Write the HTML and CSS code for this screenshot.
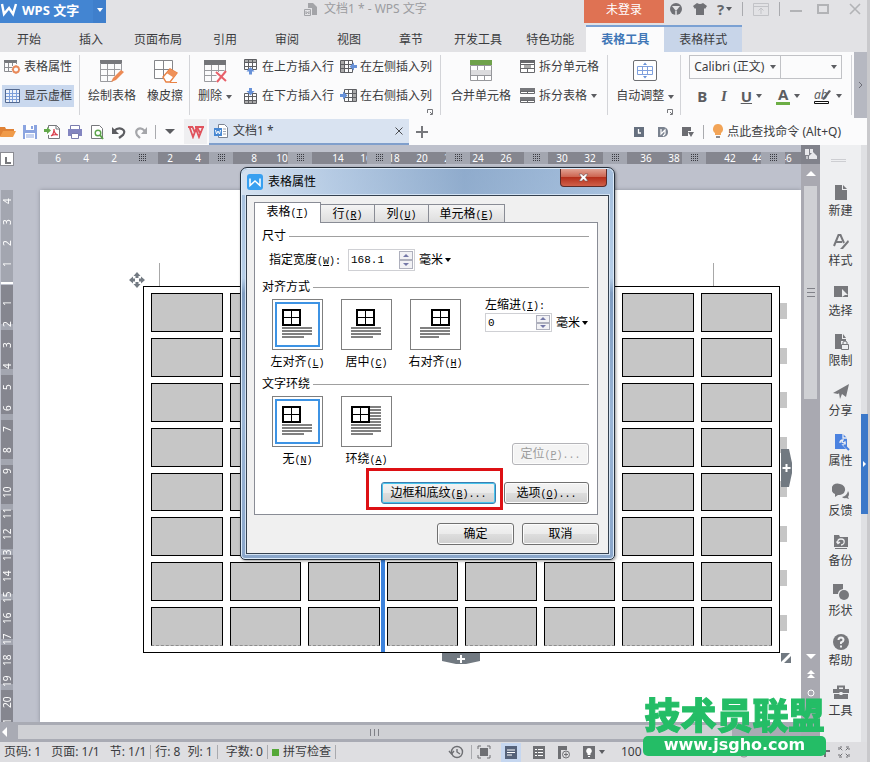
FILE: index.html
```html
<!DOCTYPE html>
<html lang="zh-CN">
<head>
<meta charset="utf-8">
<title>文档1 * - WPS 文字</title>
<link rel="stylesheet" href="styles.css">
</head>
<body>
<div class="app">
  <header class="titlebar">
    <button class="brand"><svg width="18" height="16" viewBox="0 0 18 16"><path d="M2 2l2 10 5-6 4 6 3-10" fill="none" stroke="#fff" stroke-width="2.4"/></svg><b>WPS 文字</b></button>
    <button class="brand-drop" aria-label="菜单"><i class="caret white"></i></button>
    <div class="doc-title">
      <svg width="15" height="15" viewBox="0 0 15 15"><path d="M5 1h5l4 4v8H9V6H5z" fill="#a3a4a8"/><path d="M1.500 7.500h6v6h-6z" fill="none" stroke="#a3a4a8"/><path d="M3 9v3l1.500-2L6 12V9" fill="none" stroke="#a3a4a8"/></svg>
      <span>文档1 * - WPS 文字</span>
    </div>
    <button class="login">未登录</button>
    <div class="win-tools">
      <svg width="14" height="14" viewBox="0 0 14 14"><circle cx="7" cy="7" r="6" fill="#707176"/><path d="M3 4h8L7 9z" fill="#e3e3e6"/><path d="M7 9v4" stroke="#e3e3e6" stroke-width="1.500" fill="none"/></svg>
      <svg width="14" height="14" viewBox="0 0 14 14"><path d="M4 1q3 2 6 0l4 3-2 3-1-1v7H3V6L2 7 0 4z" fill="#707176"/></svg>
      <span class="help">?<i class="caret"></i></span>
      <i class="bar"></i>
      <svg width="16" height="15" viewBox="0 0 16 15"><path d="M.5 1.500h15v12H.5zM.5 4.500h15M8 12V6M5.500 8.500L8 6l2.500 2.500" fill="none" stroke="#c2c3c7"/></svg>
      <i class="bar"></i>
      <svg width="12" height="12" viewBox="0 0 12 12"><path d="M0 8h12" stroke="#b2b3b6" stroke-width="2"/></svg>
      <svg width="12" height="12" viewBox="0 0 12 12"><path d="M1 2h10v8H1z" fill="none" stroke="#b2b3b6" stroke-width="2"/></svg>
      <svg width="12" height="12" viewBox="0 0 12 12"><path d="M1 1l10 10M11 1L1 11" stroke="#b2b3b6" stroke-width="1.600"/></svg>
    </div>
  </header>

  <nav class="tabs">
    <button>开始</button><button>插入</button><button class="wide">页面布局</button><button>引用</button><button>审阅</button><button>视图</button><button>章节</button><button class="wide">开发工具</button><button class="wide">特色功能</button><button class="context active">表格工具</button><button class="context">表格样式</button>
  </nav>

  <section class="ribbon">
    <div class="group stack first">
      <button class="cmd"><svg width="17" height="16" viewBox="0 0 17 16"><path d="M0 1h13v3H0z" fill="#77787c"/><path d="M.5 3v9.500H8M.5 8.500h8M4.500 4v8M8.500 4v3M12.500 3v2" fill="none" stroke="#8b8c90"/><circle cx="12" cy="10.500" r="3" fill="none" stroke="#e8895a" stroke-width="1.800"/><path d="M12 6v9M7.700 10.500h8.600" stroke="#e8895a" stroke-dasharray="1.500 6"/></svg>表格属性</button>
      <button class="cmd on"><svg width="17" height="16" viewBox="0 0 17 16"><path d="M1.500 1.500h14v13h-14z" fill="#eef3fb" stroke="#53688f"/><path d="M2 5.500h13M2 8.500h13M2 11.500h13M5.500 2v12M8.500 2v12M12.500 2v12" stroke="#7d9fda"/></svg>显示虚框</button>
    </div>
    <div class="group">
      <button class="big"><svg width="26" height="25" viewBox="0 0 26 25"><path d="M1 1h22v4H1z" fill="#77787c"/><path d="M1.500 4v18.500h12M22.500 4v9M1.500 10.500h20M1.500 16.500h14M8.500 5v17M15.500 5v12" fill="none" stroke="#9a9b9f"/><path d="M12 23l2-4 8-8 3 2-8 8z" fill="#ec8a55"/></svg>绘制表格</button>
      <button class="big"><svg width="26" height="25" viewBox="0 0 26 25"><path d="M2.500 1.500h18v18h-18zM11.500 2v17M3 10.500h17" fill="#fff" stroke="#85868a"/><path d="M11 18l7-8 7 4-7 9h-4z" fill="#fff" stroke="#e98244" stroke-width="1.400"/><path d="M14.500 14l3.500-4 7 4-3.500 4.500z" fill="#ef9159"/><path d="M18 23.500h7" stroke="#e98244"/></svg>橡皮擦</button>
    </div>
    <div class="group">
      <button class="big"><svg width="26" height="25" viewBox="0 0 26 25"><path d="M2 1h22v5H2z" fill="#737478"/><path d="M2.500 6v16.500h12M23.500 6v7M2.500 11.500h20M2.500 16.500h12M9.500 6v16M16.500 6v7" fill="none" stroke="#9a9b9f"/><path d="M14 13l10 9M24 12l-9 11" stroke="#e8606a" stroke-width="2"/></svg><span>删除<i class="caret"></i></span></button>
      <div class="stack">
        <button class="cmd"><svg width="16" height="16" viewBox="0 0 16 16"><path d="M1 1h13v3H1z" fill="#aaa"/><path d="M1.500 .5h12v10h-12zM2 3.500h11M2 7.500h11M5.500 1v9M9.500 1v9" fill="none" stroke="#5d5e62"/><path d="M6 15.500v-3H3.500L7.500 8l4 4.500H9v3z" fill="#6791d8"/></svg>在上方插入行</button>
        <button class="cmd"><svg width="16" height="16" viewBox="0 0 16 16"><path d="M1 12h13v3H1z" fill="#aaa"/><path d="M1.500 5.500h12v10h-12zM2 8.500h11M2 12.500h11M5.500 6v9M9.500 6v9" fill="none" stroke="#5d5e62"/><path d="M6 0v3H3.500l4 4.500 4-4.500H9V0z" fill="#6791d8"/></svg>在下方插入行</button>
      </div>
      <div class="stack">
        <button class="cmd"><svg width="17" height="16" viewBox="0 0 17 16"><path d="M1 2h4v12H1z" fill="#aaa"/><path d="M.5 1.500h12v12H.5zM1 5.500h11M1 9.500h11M4.500 2v11M8.500 2v11" fill="none" stroke="#5d5e62"/><path d="M17 6v3h-3v2.500L9.500 7.500 14 3.500V6z" fill="#6791d8"/></svg>在左侧插入列</button>
        <button class="cmd"><svg width="17" height="16" viewBox="0 0 17 16"><path d="M12 2h4v12h-4z" fill="#aaa"/><path d="M4.500 1.500h12v12h-12zM5 5.500h11M5 9.500h11M8.500 2v11M12.500 2v11" fill="none" stroke="#5d5e62"/><path d="M0 6v3h3v2.500l4.500-4L3 3.500V6z" fill="#6791d8"/></svg>在右侧插入列</button>
      </div>
      <svg class="corner" width="6" height="6" viewBox="0 0 6 6"><path d="M.5 4V.5H5.500V5.500H3M3 3l2 2" fill="none" stroke="#77787c"/></svg>
    </div>
    <div class="group merge">
      <button class="big"><svg width="26" height="25" viewBox="0 0 26 25"><path d="M2 1h22v5H2z" fill="#6fa24b"/><path d="M2.500 6.500h21v15h-21zM3 16.500h20M9.500 17v4M16.500 17v4M9.500 6v5M16.500 6v5" fill="#fff" stroke="#96979b"/><path d="M3 11h20v5H3z" fill="#dcdcde"/></svg>合并单元格</button>
      <div class="stack">
        <button class="cmd"><svg width="16" height="16" viewBox="0 0 16 16"><path d="M.5 1.500h14v12H.5zM1 5.500h14M1 9.500h14M5.500 6v3.500M10.500 6v3.500M7.500 10v4" fill="#fff" stroke="#67686c"/><path d="M0 1h15v3H0z" fill="#67686c"/><path d="M4 6h7v3H4z" fill="#aaa"/></svg>拆分单元格</button>
        <button class="cmd"><svg width="16" height="16" viewBox="0 0 16 16"><path d="M.5 .5h14v5H.5zM.5 9.500h14v5H.5zM1 3.500h14M1 12.500h14M7.500 3v3M7.500 9v5" fill="#fff" stroke="#67686c"/><path d="M0 0h15v3H0zM0 9h15v3H0z" fill="#77787c"/></svg>拆分表格<i class="caret tight"></i></button>
      </div>
    </div>
    <div class="group">
      <button class="big"><svg width="26" height="25" viewBox="0 0 26 25"><rect x="1.500" y="1.500" width="23" height="20" rx="1.500" fill="#fff" stroke="#6d6e72"/><path d="M5.500 7.500h15v8h-15zM6 11.500h14M10.500 8v7M15.500 8v7" fill="none" stroke="#7fa0dd"/><path d="M11 6l2-2.500L15 6zM11 17l2 2.500 2-2.500z" fill="#6791d8"/></svg><span>自动调整<i class="caret"></i></span></button>
      <svg class="corner" width="6" height="6" viewBox="0 0 6 6"><path d="M.5 4V.5H5.500V5.500H3M3 3l2 2" fill="none" stroke="#77787c"/></svg>
    </div>
    <div class="group fonts">
      <div class="boxes">
        <label class="pick family"><select aria-label="字体"><option>Calibri (正文)</option></select><i class="caret"></i></label>
        <label class="pick size"><select aria-label="字号"><option></option></select><i class="caret"></i></label>
      </div>
      <div class="format">
        <button aria-label="加粗"><b>B</b></button>
        <button aria-label="倾斜"><em>I</em></button>
        <button aria-label="下划线"><u>U</u><i class="caret"></i></button>
        <button aria-label="字体颜色" class="color"><span>A</span><i class="caret"></i></button>
        <button aria-label="突出显示"><svg width="18" height="18" viewBox="0 0 18 18"><text x="0" y="12" class="ab">ab</text><path d="M8 12l7-9 2 1-7 9z" fill="#5c5d61"/><path d="M.5 14.500h14v2H.5z" fill="#fff" stroke="#111"/></svg><i class="caret"></i></button>
      </div>
    </div>
    <button class="more" aria-label="更多"><svg width="5" height="8" viewBox="0 0 5 8"><path d="M1 1l3 3-3 3" fill="none" stroke="#6d6e78"/></svg></button>
  </section>

  <section class="docbar">
    <div class="quick">
      <svg width="16" height="16" viewBox="0 0 16 16"><path d="M0 13V3h5l1 2h8v3H4z" fill="#e08236"/><path d="M3 7h13l-3 6H0z" fill="#f09b4a"/></svg>
      <svg width="16" height="16" viewBox="0 0 16 16"><path d="M1 1h14v14H1z" fill="#8ba4e0"/><path d="M4 1h8v5H4z" fill="#fff"/><path d="M3 9h10v6H3z" fill="#fff"/><path d="M9 2h2v3H9z" fill="#8ba4e0"/><path d="M4 11h8M4 13h8" stroke="#8ba4e0"/></svg>
      <svg width="17" height="16" viewBox="0 0 17 16"><path d="M4.500 4V1.500h8l3 3v10h-11V11" fill="#fff" stroke="#77787c"/><path d="M12 1v4h4" fill="none" stroke="#77787c"/><path d="M0 5h3V3l4 3.500L3 10V8H0z" fill="#62a84a"/><path d="M7 12q3-2 3-7 0 5 4 6-4-1-7 1z" fill="none" stroke="#d9414e" stroke-width="1.200"/></svg>
      <svg width="16" height="16" viewBox="0 0 16 16"><path d="M3.500 1.500h9v4h-9z" fill="#fff" stroke="#7a7cae"/><path d="M1 5h14v7H1z" fill="#8385c0"/><path d="M4.500 9.500h7v5h-7z" fill="#fff" stroke="#7a7cae"/></svg>
      <svg width="16" height="16" viewBox="0 0 16 16"><path d="M2.500 1.500h8l3 3v10h-11z" fill="#fff" stroke="#77787c"/><circle cx="9" cy="9" r="2.800" fill="#fff" stroke="#5ba34a" stroke-width="1.400"/><path d="M11 11l3 4" stroke="#5ba34a" stroke-width="1.800"/></svg>
      <svg width="16" height="16" viewBox="0 0 16 16"><path d="M3 7q4-4 8-2t1 6l-4 3" fill="none" stroke="#5c5d61" stroke-width="2.200"/><path d="M1 3v7h7z" fill="#5c5d61"/></svg>
      <svg width="16" height="16" viewBox="0 0 16 16"><path d="M12 7Q8 3 5 5t-1 6l3 3" fill="none" stroke="#a5a6aa" stroke-width="2.200"/><path d="M14 3v7H8z" fill="#a5a6aa"/></svg>
    </div>
    <i class="bar"></i>
    <button class="quick-more" aria-label="自定义"><i class="caret large"></i></button>
    <button class="home" aria-label="首页"><svg width="18" height="14" viewBox="0 0 18 14"><path d="M1 2h5M8 2h9M2.500 2L6 12l3-8 3 8 4-10M5.500 2L8 8M10 2l3 6" fill="none" stroke="#e0525c" stroke-width="1.800"/></svg></button>
    <div class="doc-tab">
      <svg width="15" height="16" viewBox="0 0 15 16"><path d="M4.500 1.500h6l3 3v10h-9z" fill="#fff" stroke="#7d8492"/><path d="M9 6h3M9 8.500h3M9 11h3" stroke="#9aa3b2"/><path d="M0 5h8v8H0z" fill="#4787d2"/><path d="M1.500 7l1 4L4 8l1.500 3 1-4" fill="none" stroke="#fff"/></svg>
      <span>文档1 *</span>
      <button aria-label="关闭文档"><svg width="8" height="8" viewBox="0 0 8 8"><path d="M.5 .5l7 7M7.500 .5l-7 7" stroke="#4b4c50"/></svg></button>
    </div>
    <button class="plus" aria-label="新建"><svg width="12" height="12" viewBox="0 0 12 12"><path d="M6 0v12M0 6h12" stroke="#77787c" stroke-width="2"/></svg></button>
    <div class="doc-tools">
      <svg width="12" height="12" viewBox="0 0 12 12"><path d="M1 1h10v10H1z" fill="#66707f"/><path d="M5.500 3v4H8" fill="none" stroke="#fff" stroke-width="1.300"/></svg>
      <svg width="12" height="12" viewBox="0 0 12 12"><path d="M1 1h6q4 1 4 5t-4 5H1z" fill="#7a828f"/><path d="M4 3v5l4-4v4l-2 2" fill="none" stroke="#fff" stroke-width="1.200"/></svg>
      <svg width="14" height="12" viewBox="0 0 14 12"><path d="M1 1h9v4H7v5H1zM7 6h6l-3 5z" fill="#6c6d72"/></svg>
      <i class="bar"></i>
      <svg width="12" height="15" viewBox="0 0 12 15"><path d="M6 0a5 5 0 0 1 3 9v2H3V9a5 5 0 0 1 3-9z" fill="#f2a457"/><path d="M4 12h4v2H4z" fill="#8a8b90"/></svg>
      <span>点此查找命令 (Alt+Q)</span>
    </div>
  </section>

  <main class="work">
    <div class="canvas">
      <div class="hruler">
        <span class="stop"><svg width="12" height="12" viewBox="0 0 12 12"><path d="M5 4v6h5" fill="none" stroke="#77787c" stroke-width="2"/></svg></span>
        <div class="scale">
          <div class="nums"><span>6</span><span>4</span><span>2</span><span></span><span>2</span><span>4</span><span></span><span>8</span><span>10</span><span></span><span>14</span><span>16</span><span>18</span><span>20</span><span>22</span><span>24</span><span>26</span><span></span><span>30</span><span>32</span><span></span><span>36</span><span>38</span><span></span><span>42</span><span>44</span><span>46</span></div>
          <div class="marks"><i></i><i></i><i></i><i></i><i></i><i></i><i></i><i></i><i></i></div>
        </div>
      </div>
      <div class="sheet-row">
        <div class="vruler">
          <div class="before"><span>4</span><span>3</span><span>2</span><span>1</span></div>
          <div class="after"><span>1</span><span>2</span><span>3</span><span>4</span><span>5</span><span>6</span><span>7</span><span>8</span><span>9</span><span>10</span><span>11</span><span>12</span><span>13</span><span>14</span><span>15</span><span>16</span><span>17</span><span>18</span><span>19</span><span>20</span><span>1</span></div>
        </div>
        <div class="page">
          <div class="table-wrap">
            <table class="grid">
              <tr><td></td><td></td><td></td><td></td><td></td><td></td><td></td><td></td></tr>
              <tr><td></td><td></td><td></td><td></td><td></td><td></td><td></td><td></td></tr>
              <tr><td></td><td></td><td></td><td></td><td></td><td></td><td></td><td></td></tr>
              <tr><td></td><td></td><td></td><td></td><td></td><td></td><td></td><td></td></tr>
              <tr><td></td><td></td><td></td><td></td><td></td><td></td><td></td><td></td></tr>
              <tr><td></td><td></td><td></td><td></td><td></td><td></td><td></td><td></td></tr>
              <tr><td></td><td></td><td></td><td></td><td></td><td></td><td></td><td></td></tr>
              <tr><td></td><td></td><td></td><td></td><td></td><td></td><td></td><td></td></tr>
            </table>
            <div class="row-ends"><i></i><i></i><i></i><i></i><i></i><i></i><i></i><i></i></div>
            <i class="col-line"></i><i class="margin-mark start"></i><i class="margin-mark end"></i>
            <svg class="move" width="18" height="18" viewBox="0 0 18 18"><path d="M9 1l3.500 4H10.500v2h-3V5H5.500zM9 17l3.500-4H10.500v-2h-3v2H5.500zM1 9l4-3.500V7.500h2v3H5v2zM17 9l-4-3.500V7.500h-2v3h2v2z" fill="#737a82"/></svg>
            <svg class="add-row" width="38" height="12" viewBox="0 0 38 12"><path d="M0 0h38v8l-14 3H14L0 8z" fill="#717981"/><path d="M19 2v8M15 6h8" stroke="#fff" stroke-width="2"/></svg>
            <svg class="add-col" width="12" height="38" viewBox="0 0 12 38"><path d="M0 0h8l3 14v10L8 38H0z" fill="#717981"/><path d="M5.500 15v8M1.500 19h8" stroke="#fff" stroke-width="2"/></svg>
            <svg class="resize" width="10" height="10" viewBox="0 0 10 10"><path d="M0 0h9L0 9zM10 3v7H3z" fill="#717981"/></svg>
          </div>
        </div>
      </div>
      <div class="hscroll"><i class="tri-left"></i><div class="thumb"><svg width="10" height="7" viewBox="0 0 10 7"><path d="M.5 0v7M4.500 0v7M8.500 0v7" stroke="#808188"/></svg></div></div>
    </div>

    <div class="vscroll">
      <div class="ruler-toggle"><svg width="12" height="11" viewBox="0 0 12 11"><path d="M0 0h4v6H0zM5 0h3v4H5z" fill="#e8e8ec"/><path d="M4 10V7l4-4 4 4v3z" fill="#e8e8ec"/><path d="M1 7h2v3H1z" fill="#c4c4ca"/></svg></div>
      <i class="tri-up"></i>
      <div class="thumb"><svg width="8" height="10" viewBox="0 0 8 10"><path d="M0 .5h8M0 4.500h8M0 8.500h8" stroke="#808188"/></svg></div>
      <div class="jump"><i class="tri-down"></i><svg width="10" height="10" viewBox="0 0 10 10"><path d="M1 5l4-4 4 4zM1 9l4-4 4 4z" fill="#fff"/></svg><svg width="8" height="8" viewBox="0 0 8 8"><circle cx="4" cy="4" r="3" fill="none" stroke="#fff"/></svg></div>
    </div>

    <aside class="pane">
      <i class="grip"></i>
      <button><svg width="18" height="18" viewBox="0 0 18 18"><path d="M3 2h7v5h5v10H3zM11 2l4 4h-4z"/></svg>新建</button>
      <button><svg width="18" height="18" viewBox="0 0 18 18"><path d="M2 13L6.500 2h2L12 10M4 9h6" class="line"/><path d="M9 15l7-8 1 2-6 7H8z"/></svg>样式</button>
      <button><svg width="18" height="18" viewBox="0 0 18 18"><path d="M2 3h14v11H2z"/><path d="M10 6l6 6h-3l-3 2z" class="cut"/></svg>选择</button>
      <button><svg width="18" height="18" viewBox="0 0 18 18"><path d="M3 1h7v5h4v2H9v8H3zM11 1l3 4h-3z"/><path d="M9.500 11.500h7v5h-7zM11 11V9q2-2 4 0v2" class="thin"/></svg>限制</button>
      <button><svg width="18" height="18" viewBox="0 0 18 18"><path d="M1 10L17 1l-3 13-4-3-2 5-1-6 7-6-8 7z"/></svg>分享</button>
      <button class="blue"><svg width="18" height="18" viewBox="0 0 18 18"><path d="M3 1h8l4 4v11H3z"/><path d="M11 1v4h4" class="cut-line"/><path d="M8 10q0-3 3-3l-1 2 2 1 1-1q1 3-2 3l5 5" class="cut-line"/><path d="M12 12l5 5" class="line"/></svg>属性</button>
      <button><svg width="18" height="18" viewBox="0 0 18 18"><path d="M8 1a6 5.500 0 1 1-2 11l-3 2V11a6 5.500 0 0 1 5-10z"/><path d="M10 14q5-1 6-6 2 3 0 6l1 2-3-1q-2 1-4-1z"/></svg>反馈</button>
      <button><svg width="18" height="18" viewBox="0 0 18 18"><path d="M2 2h5l1 2h8v10H2zM3 15h12v1H3z"/><path d="M6 10q-1-4 3-4t3 4q-1 2-3 2M4.500 8.500l1.500 2L8 9" class="cut-line"/></svg>备份</button>
      <button><svg width="18" height="18" viewBox="0 0 18 18"><path d="M1 1h10v5q-5 1-5 5H1z"/><circle cx="12" cy="12" r="5"/></svg>形状</button>
      <button><svg width="18" height="18" viewBox="0 0 18 18"><circle cx="9" cy="9" r="8"/><path d="M6.500 7q0-2.500 2.500-2.500T11.500 7Q11.500 8.500 9 9.500V11M9 12.500v2" class="cut-line bold"/></svg>帮助</button>
      <button><svg width="18" height="18" viewBox="0 0 18 18"><path d="M1 6h16v4H1zM2 11h14v5H2z"/><path d="M6 6V3.500h6V6" class="line"/><path d="M7.500 9h3v3h-3z" class="cut"/></svg>工具</button>
    </aside>
    <div class="edge"><button aria-label="收起"><svg width="5" height="6" viewBox="0 0 5 6"><path d="M1 0l3 3-3 3z" fill="#fff"/></svg></button></div>

    <section class="dialog" role="dialog" aria-label="表格属性">
      <header>
        <svg width="16" height="16" viewBox="0 0 16 16"><rect width="16" height="16" rx="3" fill="#38a0f0"/><path d="M3 4.500v7l5-4.500 5 4.500v-7" fill="none" stroke="#fff" stroke-width="1.500"/></svg>
        <span>表格属性</span>
        <button aria-label="关闭"><svg width="11" height="9" viewBox="0 0 11 9"><path d="M1 1h3l1.500 2L7 1h3L7.500 4.500 10 8H7L5.500 6 4 8H1l2.500-3.500z" fill="#fff" stroke="#6d5050" stroke-width=".6"/></svg></button>
      </header>
      <div class="client">
        <div class="dtabs">
          <button class="sel">表格<kbd>(<u>T</u>)</kbd></button><button>行<kbd>(<u>R</u>)</kbd></button><button>列<kbd>(<u>U</u>)</kbd></button><button>单元格<kbd>(<u>E</u>)</kbd></button>
        </div>
        <div class="panel">
          <h3>尺寸</h3>
          <div class="width-row">
            <label for="w">指定宽度<kbd>(<u>W</u>):</kbd></label>
            <span class="spin"><input id="w" value="168.1"><i><b></b><b class="dn"></b></i></span>
            <span>毫米<i class="caret black"></i></span>
          </div>
          <h3>对齐方式</h3>
          <div class="options align">
            <label><input type="radio" name="align" checked><span class="thumbnail"><svg width="31" height="31" viewBox="0 0 31 31"><path d="M1 1h17v15H1z" class="frame"/><path d="M1 8.500h17M9.500 1v15" class="inner"/><path d="M0 19h30M0 22h30M0 25h30M0 28h22" class="lines"/></svg></span><span>左对齐<kbd>(<u>L</u>)</kbd></span></label>
            <label><input type="radio" name="align"><span class="thumbnail"><svg width="31" height="31" viewBox="0 0 31 31"><path d="M6 1h17v15H6z" class="frame"/><path d="M6 8.500h17M14.500 1v15" class="inner"/><path d="M0 19h30M0 22h30M0 25h30M0 28h22" class="lines"/></svg></span><span>居中<kbd>(<u>C</u>)</kbd></span></label>
            <label><input type="radio" name="align"><span class="thumbnail"><svg width="31" height="31" viewBox="0 0 31 31"><path d="M12 1h17v15H12z" class="frame"/><path d="M12 8.500h17M20.500 1v15" class="inner"/><path d="M0 19h30M0 22h30M0 25h30M0 28h19" class="lines"/></svg></span><span>右对齐<kbd>(<u>H</u>)</kbd></span></label>
            <div class="indent">
              <label for="ind">左缩进<kbd>(<u>I</u>):</kbd></label>
              <div><span class="spin"><input id="ind" value="0"><i><b></b><b class="dn"></b></i></span><span>毫米<i class="caret black"></i></span></div>
            </div>
          </div>
          <h3>文字环绕</h3>
          <div class="options">
            <label><input type="radio" name="wrap" checked><span class="thumbnail"><svg width="31" height="31" viewBox="0 0 31 31"><path d="M1 1h17v15H1z" class="frame"/><path d="M1 8.500h17M9.500 1v15" class="inner"/><path d="M0 19h30M0 22h30M0 25h30M0 28h22" class="lines"/></svg></span><span>无<kbd>(<u>N</u>)</kbd></span></label>
            <label><input type="radio" name="wrap"><span class="thumbnail"><svg width="31" height="31" viewBox="0 0 31 31"><path d="M18 1h12M18 4h12M18 7h12M18 10h12M18 13h12M18 16h12M0 19h30M0 22h30M0 25h30M0 28h22" class="lines"/><path d="M1 1h17v15H1z" class="frame"/><path d="M1 8.500h17M9.500 1v15" class="inner"/></svg></span><span>环绕<kbd>(<u>A</u>)</kbd></span></label>
            <button class="btn locate" disabled>定位<kbd>(<u>P</u>)...</kbd></button>
          </div>
          <div class="actions">
            <button class="btn focus">边框和底纹<kbd>(<u>B</u>)...</kbd></button>
            <button class="btn">选项<kbd>(<u>O</u>)...</kbd></button>
            <i class="callout"></i>
          </div>
        </div>
        <div class="foot"><button class="btn">确定</button><button class="btn">取消</button></div>
      </div>
    </section>
  </main>

  <footer class="status">
    <span>页码: 1</span><span class="s2">页面: 1/1</span><span>节: 1/1</span><i class="bar"></i><span class="s3">行: 8</span><span>列: 1</span><i class="bar"></i><span class="s4">字数: 0</span><i class="bar"></i><i class="ok"></i><span>拼写检查</span><i class="bar"></i>
    <div class="views">
      <svg width="16" height="16" viewBox="0 0 16 16"><circle cx="9" cy="8" r="5.500" fill="none" stroke="#6e6f73" stroke-width="1.400"/><path d="M9 5v3l3 2M1 7l2.500 3L6 7" fill="none" stroke="#6e6f73" stroke-width="1.400"/></svg>
      <i class="bar"></i>
      <svg width="14" height="14" viewBox="0 0 14 14"><path d="M3 3h8v8H3z" fill="#6e6f73"/><path d="M1 4V1h3M10 1h3v3M13 10v3h-3M4 13H1v-3" fill="none" stroke="#6e6f73"/></svg>
      <span class="view-on"><svg width="12" height="13" viewBox="0 0 12 13"><path d="M0 0h12v13H0z" fill="#55627a"/><path d="M2 4h8M2 6.500h8M2 9h5" stroke="#fff"/></svg></span>
      <svg width="12" height="13" viewBox="0 0 12 13"><path d="M0 0h12v13H0z" fill="#6e6f73"/><path d="M2 3.500h2M5 3.500h5M2 6.500h2M5 6.500h5M2 9.500h2M5 9.500h5" stroke="#fff"/></svg>
      <svg width="14" height="13" viewBox="0 0 14 13"><path d="M1 0h9v4H4v9H1z" fill="#6e6f73"/><circle cx="9" cy="8.500" r="3.500" fill="#dedee1" stroke="#6e6f73"/><path d="M7 8.500h4M9 6.500v4" stroke="#6e6f73"/></svg>
      <span class="bulb"><svg width="12" height="13" viewBox="0 0 12 13"><path d="M0 0h12v13H0z" fill="#6e6f73"/><path d="M6 2a3 3 0 0 1 1.500 5.500V9h-3V7.500A3 3 0 0 1 6 2zM5 10h2v1H5z" fill="#fff"/></svg><i class="caret"></i></span>
      <span class="zoom">100</span>
      <svg class="knob" width="12" height="12" viewBox="0 0 12 12"><circle cx="6" cy="6" r="5" fill="none" stroke="#8c8d91"/></svg>
      <svg width="8" height="12" viewBox="0 0 8 12"><path d="M0 5h8M3 2v9" stroke="#6e6f73" stroke-width="2"/></svg>
      <svg class="full" width="12" height="12" viewBox="0 0 12 12"><path d="M1 4V1h3M8 1h3v3M11 8v3H8M4 11H1V8M2 2l3 3M10 2L7 5M10 10L7 7M2 10l3-3" fill="none" stroke="#6e6f73" stroke-dasharray="3 1"/></svg>
    </div>
  </footer>
</div>
<div class="stamp"><strong>技术员联盟</strong><span>www.jsgho.com</span></div>
</body>
</html>
```
FILE: styles.css
```css
* { box-sizing: border-box; }
body { margin: 0; background: #c9c9cc; color: #3b3c40; font: 12px/16px "Noto Sans", "Noto Sans CJK SC", sans-serif; overflow: hidden; }
button, input, select { font: inherit; color: inherit; margin: 0; padding: 0; border: 0; background: none; }
button { white-space: nowrap; }
svg { display: block; flex: none; }
h3 { margin: 0; font: inherit; }
.app { display: flex; flex-direction: column; height: 100vh; margin-right: 3px; background: #e2e2e5; white-space: nowrap; }
.caret { display: inline-block; flex: none; border: 3px solid transparent; border-top: 4px solid #5c5d61; border-bottom: 0; margin-left: 4px; vertical-align: middle; }
.caret.white { border-top-color: #fff; margin: 0; }
.caret.black { border-top-color: #000; margin-left: 2px; }
.caret.large { border-width: 5px 5px 0; margin: 0; }
.caret.tight { margin-left: 1px; }
.bar { width: 1px; height: 14px; background: #a9aaae; flex: none; }

.titlebar { display: flex; height: 24px; align-items: flex-start; flex: none; }
.brand { display: flex; align-items: center; height: 23px; width: 93px; background: #4385d2; color: #fff; gap: 4px; font-size: 13px; padding-bottom: 4px; }
.brand-drop { width: 13px; height: 23px; background: #3f7fcc; display: flex; align-items: center; justify-content: center; padding-bottom: 4px; }
.doc-title { flex: 1; display: flex; align-items: center; gap: 6px; padding-left: 197px; height: 18px; color: #9b9ca0; }
.login { width: 80px; height: 23px; background: #df7253; color: #fff; padding-bottom: 4px; }
.win-tools { display: flex; align-items: center; width: 203px; height: 18px; padding-left: 5px; gap: 10px; color: #66676b; }
.win-tools svg:nth-last-child(2) { margin-left: 5px; }
.win-tools svg:last-child { margin-left: 10px; }
.help { font-size: 15px; font-weight: bold; display: flex; align-items: center; }
.help .caret { margin-left: 2px; }

.tabs { display: flex; height: 28px; flex: none; margin-left: -2px; padding-top: 1px; }
.tabs button { padding: 3px 19px 0; }
.tabs .wide { padding: 3px 12px 0; }
.tabs .context { padding: 0 15px; border-top: 2px solid #7ba1d3; background: #c8d5e9; }
.tabs .active { background: #fbfbfc; color: #4177b7; font-weight: bold; }

.ribbon { display: flex; height: 66px; flex: none; background: #fbfbfc; padding-left: 2px; }
.group { position: relative; display: flex; align-items: stretch; padding: 4px 6px; gap: 9px; border-right: 1px solid #d3d4d8; margin: 3px 0; height: 60px; }
.ribbon .stack { display: flex; flex-direction: column; gap: 7px; }
.ribbon .first { padding: 1px 5px 0 0; }
.cmd { display: flex; align-items: center; gap: 3px; height: 22px; padding: 0 2px; }
.cmd.on { background: #c9d8ee; }
.group > .stack { margin-top: -3px; }
.stack + .stack { margin-left: -7px; }
.ribbon .merge { padding-left: 8px; gap: 7px; }
.big { display: flex; flex-direction: column; align-items: center; gap: 4px; padding-left: 2px; }
.corner { position: absolute; right: 7px; bottom: 0; }
.ribbon .fonts { flex-direction: column; gap: 4px; padding: 0 9px 0 8px; }
.fonts .boxes { display: flex; width: 153px; height: 24px; border: 1px solid #c1c2c6; }
.pick { position: relative; display: flex; align-items: center; padding-right: 4px; }
.pick select { appearance: none; width: 100%; height: 22px; padding-left: 4px; overflow: hidden; }
.pick.family { width: 91px; border-right: 1px solid #c1c2c6; }
.pick.size { flex: 1; }
.pick .caret { margin-left: 0; }
.format { display: flex; align-items: center; justify-content: space-between; height: 26px; padding-left: 8px; font-size: 15px; color: #5c5d61; }
.format button { display: flex; align-items: center; }
.format em, .format u { font-family: "Liberation Serif", serif; font-weight: bold; }
.format u { font-family: inherit; }
.color span { line-height: 15px; border-bottom: 3px solid #6cae45; padding: 0 2px; font-weight: bold; }
.ab { font: italic 12px "Noto Sans", sans-serif; fill: #5c5d61; }
.more { width: 13px; background: #b6b8c1; margin-left: auto; display: flex; align-items: center; justify-content: center; }

.docbar { display: flex; align-items: center; height: 27px; flex: none; background: #fbfbfc; }
.quick { display: flex; gap: 6px; width: 155px; }
.quick-more { width: 28px; display: flex; justify-content: center; }
.home { width: 23px; height: 25px; background: #efeff1; display: flex; align-items: center; justify-content: center; margin-right: 2px; }
.doc-tab { width: 200px; height: 26px; align-self: flex-end; background: #d9e3f1; border-bottom: 2px solid #809fcc; display: flex; align-items: center; gap: 4px; padding: 0 6px 0 5px; }
.doc-tab button { margin-left: auto; }
.plus { margin-left: 7px; }
.doc-tools { margin-left: auto; display: flex; align-items: center; gap: 8px; padding-right: 26px; }
.doc-tools span { margin-left: -5px; }
.doc-tools svg:nth-of-type(2) { margin: 0 4px; }

.work { position: relative; display: flex; flex: 1; min-height: 0; }
.canvas { flex: 1; display: flex; flex-direction: column; background: #bec1cc; min-width: 0; }
.hruler { display: flex; padding-top: 7px; height: 45px; color: #fff; font-size: 10px; line-height: 12px; flex: none; }
.stop { width: 14px; height: 14px; background: #fff; border: 1px solid #8b8c93; margin-right: 24px; }
.scale { position: relative; flex: 1; height: 12px; background: linear-gradient(90deg, #a3a6b0 120px, #85868f 120px); overflow: hidden; }
.nums { display: flex; padding-left: 6px; }
.nums span { width: 28px; flex: none; text-align: center; }
.marks { position: absolute; inset: 0 16px 0 92px; display: flex; justify-content: space-between; }
.marks i { width: 24px; background: #a3a6b0; display: flex; justify-content: center; align-items: center; }
.marks i::before { content: ""; width: 8px; height: 8px; background: repeating-linear-gradient(90deg, transparent 0 1px, #3a3b42 1px 2px); -webkit-mask: repeating-linear-gradient(#000 0 1px, transparent 1px 2px); mask: repeating-linear-gradient(#000 0 1px, transparent 1px 2px); }
.sheet-row { flex: 1; display: flex; min-height: 0; }
.vruler { width: 12px; margin: 0 26px 0 1px; color: #fff; font-size: 10px; line-height: 12px; overflow: hidden; }
.vruler div { display: flex; flex-direction: column; background: #a3a6b0; }
.vruler span { height: 21px; flex: none; writing-mode: vertical-rl; transform: rotate(180deg); text-align: center; }
.vruler .before { height: 94px; border-bottom: 2px solid #fff; padding-top: 1px; }
.vruler .after { background: repeating-linear-gradient(#85868f 0 39px, #a3a6b0 39px 45px); margin-top: 1px; padding-top: 8px; }
.vruler .after span:last-child { height: 16px; }
.page { flex: 1; background: #fff; margin-left: 1px; box-shadow: 0 0 4px #8d909b; padding: 96px 21px 0 103px; clip-path: inset(-5px 0 0 -5px); }
.table-wrap { position: relative; height: 367px; }
.grid { width: 100%; height: 100%; border: 1px solid #000; border-spacing: 7px 6px; table-layout: fixed; }
.grid td { padding: 0; background: #c6c6c6; border: 1px solid #000; }
.grid tr:last-child td { border-bottom: 1px dashed #8d8d8d; }
.row-ends { position: absolute; left: 100%; top: 17px; height: 328px; display: flex; flex-direction: column; justify-content: space-between; }
.row-ends i { width: 7px; height: 16px; background: #c6c6c6; }
.col-line { position: absolute; left: 238px; bottom: 1px; width: 4px; height: 94px; background: #3c82dc; }
.margin-mark { position: absolute; top: -23px; width: 1px; height: 23px; background: #a8a8a8; }
.margin-mark.start { left: 16px; }
.margin-mark.end { right: 66px; }
.move { position: absolute; left: -15px; top: -15px; }
.add-row { position: absolute; top: 100%; left: 299px; }
.add-col { position: absolute; left: 100%; top: 163px; margin-left: 1px; }
.resize { position: absolute; left: 100%; top: 100%; margin-left: 1px; }
.hscroll { height: 20px; flex: none; background: #a9abb4; display: flex; align-items: center; padding: 0 69px 0 2px; }
.hscroll .thumb { flex: 1; height: 14px; background: #cfd0d4; margin-left: 11px; display: flex; align-items: center; justify-content: center; }
.tri-left { border: 5px solid transparent; border-right-color: #fff; border-left: 0; }

.vscroll { width: 19px; background: #a9a9b1; display: flex; flex-direction: column; align-items: center; flex: none; }
.ruler-toggle { width: 19px; height: 19px; background: #81828b; display: flex; align-items: center; justify-content: center; }
.tri-up { border: 5px solid transparent; border-bottom-color: #fff; border-top: 0; margin: 7px 0 10px; }
.vscroll .thumb { width: 13px; height: 213px; background: #cfd0d4; display: flex; align-items: center; justify-content: center; }
.jump { display: flex; flex-direction: column; align-items: center; gap: 10px; margin: auto 0 45px; }
.tri-down { border: 5px solid transparent; border-top-color: #fff; border-bottom: 0; }

.pane { width: 41px; flex: none; background: #eeeff1; display: flex; flex-direction: column; }
.grip { width: 15px; height: 3px; margin: 14px auto 13px 11px; border: solid #cdced2; border-width: 1px 0; flex: none; }
.pane button { height: 50px; flex: none; display: flex; flex-direction: column; align-items: center; gap: 2px; padding-top: 8px; }
.pane svg { fill: #77787c; }
.pane .cut { fill: #eeeff1; }
.pane .line { fill: none; stroke: #77787c; stroke-width: 2; }
.pane .thin { fill: #eeeff1; stroke: #77787c; }
.pane .cut-line { fill: none; stroke: #eeeff1; stroke-width: 1.3; }
.pane .bold { stroke-width: 2; }
.pane .blue svg { fill: #4b82e0; }
.pane .blue .line { stroke: #4b82e0; }
.edge { width: 6px; background: #dfe0e3; flex: none; padding-top: 269px; }
.edge button { width: 7px; height: 100px; background: #3b78c9; display: flex; align-items: center; justify-content: center; }

.status { display: flex; align-items: center; height: 20px; flex: none; padding-left: 4px; background: #dedee1; }
.status .s2 { margin: 0 10px; }
.status > .bar { margin: 0 4px; }
.status .s3 { margin-right: 7px; }
.status .s4 { margin-left: 4px; }
.ok { width: 7px; height: 7px; background: #55a838; margin-right: 4px; }
.views { margin-left: auto; display: flex; align-items: center; gap: 12px; padding-right: 17px; }
.views > .bar { margin: 0 -7px 0 -5px; }
.view-on { background: #c6d7f0; padding: 3px 4px; margin: 0 0 0 -2px; }
.bulb { display: flex; align-items: center; }
.zoom { width: 105px; margin-left: 4px; }
.knob { margin-right: 60px; }
.full { margin-left: -4px; }

.dialog { position: absolute; left: 240px; top: 22px; width: 375px; height: 393px; border: 1px solid #26303c; border-radius: 7px 7px 5px 5px; padding: 0 5px 5px; display: flex; flex-direction: column; color: #000; background: linear-gradient(#a3bddb, #b7cfe8 110px, #7f9cc0 125px, #9bb6d6 250px, #8aa6ca); box-shadow: inset 0 0 0 1px #dcebfa, 1px 1px 3px #0006; }
.dialog header { display: flex; align-items: center; gap: 5px; height: 26px; flex: none; background: linear-gradient(90deg, #dfe9f4cc, #c2d4e988 25%, #7d9bbf88 60%, #a7c1de66); margin: 1px -4px 0; padding: 0 6px 0 5px; border-radius: 6px 6px 0 0; }
.dialog header button { margin-left: auto; align-self: flex-start; width: 47px; height: 18px; background: linear-gradient(#e2a293, #cd6652 45%, #b5301c 50%, #d0604a); border: 1px solid #5c2b28; border-top: 0; border-radius: 0 0 4px 4px; display: flex; align-items: center; justify-content: center; }
.client { flex: 1; border: 1px solid #35414f; background: #f0f0f0; padding: 6px 10px 0 7px; box-shadow: 0 0 0 1px #d3e3f4; display: flex; flex-direction: column; }
kbd { font: 10px/12px "Liberation Mono", monospace; }
.dtabs { display: flex; align-items: flex-end; height: 20px; position: relative; }
.dtabs button { height: 18px; width: 55px; border: 1px solid #898c95; border-bottom: 0; background: linear-gradient(#f4f4f4, #dedede); margin-right: -1px; line-height: 16px; flex: none; }
.dtabs button:last-child { width: 77px; }
.dtabs .sel { width: 67px; height: 21px; background: #fff; margin-bottom: -1px; z-index: 1; padding-bottom: 2px; }
.panel { height: 293px; border: 1px solid #898c95; background: #fff; padding: 5px 8px 0 7px; flex: none; }
.panel h3 { display: flex; align-items: center; gap: 3px; height: 16px; }
.panel h3::after { content: ""; flex: 1; height: 1px; background: #a0a0a0; }
.width-row { display: flex; align-items: center; gap: 4px; padding-left: 7px; height: 31px; margin-bottom: 4px; }
.width-row label { width: 75px; }
.spin { display: flex; width: 67px; height: 22px; border: 1px solid #cfd0d4; padding: 1px; background: #fff; }
.spin input { flex: 1; width: 40px; min-width: 0; padding-left: 1px; font: 11px/14px "Liberation Mono", monospace; outline: 0; }
.spin > i { width: 14px; display: flex; flex-direction: column; }
.spin b { flex: 1; border: 1px solid #aeb0bd; background: #f2f2f5; display: flex; align-items: center; justify-content: center; }
.spin b::before { content: ""; border: 3px solid transparent; border-bottom: 3px solid #7478a8; border-top: 0; }
.spin .dn::before { border-top: 3px solid #7478a8; border-bottom: 0; }
.options { display: flex; padding: 4px 0 0 8px; height: 82px; }
.options.align { height: 81px; }
.options > label { width: 55px; margin-right: 14px; display: flex; flex-direction: column; align-items: center; gap: 4px; }
.options input[type="radio"] { position: absolute; opacity: 0; }
.thumbnail { width: 51px; height: 51px; border: 1px solid #7f7f7f; display: flex; align-items: center; justify-content: center; background: #fff; }
input:checked + .thumbnail { box-shadow: inset 0 0 0 2px #fff, inset 0 0 0 4px #3d93e4; }
.frame { fill: #fff; stroke: #000; stroke-width: 2; }
.inner { fill: none; stroke: #000; }
.lines { fill: none; stroke: #808080; stroke-width: 2; shape-rendering: crispEdges; }
.indent { margin-left: 8px; margin-top: -2px; }
.indent > div { display: flex; align-items: center; gap: 4px; }
.indent .spin { height: 19px; }
.indent .spin input { line-height: 12px; }
.btn { height: 22px; width: 77px; border: 1px solid #707070; border-radius: 3px; background: linear-gradient(#f3f3f3, #ebebeb 48%, #dddddd 52%, #cfcfcf); box-shadow: inset 0 0 0 1px #fcfcfc; line-height: 18px; }
.btn:disabled { color: #9c9c9c; border-color: #b4b4b8; background: #f4f4f4; }
.locate { margin: 47px 0 0 auto; }
.actions { position: relative; display: flex; justify-content: flex-end; gap: 8px; margin-top: 8px; }
.actions .btn { width: 85px; }
.actions .focus { width: 115px; border-color: #3c7fb1; box-shadow: inset 0 0 0 1px #48c4ec; }
.callout { position: absolute; right: 86px; top: -14px; width: 137px; height: 42px; border: 3px solid #dd1014; }
.foot { display: flex; justify-content: flex-end; gap: 8px; padding-top: 8px; margin-right: -1px; }

.stamp { position: fixed; right: 44px; bottom: 6px; width: 183px; display: flex; flex-direction: column; align-items: center; }
.stamp strong { color: #24bd66; font: 900 36px/36px "Noto Sans CJK SC", sans-serif; white-space: nowrap; -webkit-text-stroke: 1px #24bd66; }
.stamp span { width: 100%; height: 20px; margin-top: 5px; border-radius: 5px; background: #24bd66; color: #fff; font: bold 16px/18px "DejaVu Sans", sans-serif; text-align: center; }
```
